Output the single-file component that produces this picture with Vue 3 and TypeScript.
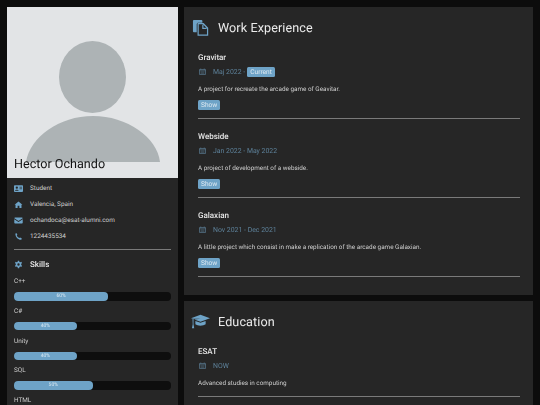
<script setup lang="ts">
interface Entry { title: string; date: string; current?: boolean; text: string; show: boolean }
const contacts = [
  { icon: 'id', text: 'Student' },
  { icon: 'home', text: 'Valencia, Spain' },
  { icon: 'mail', text: 'ochandoca@esat-alumni.com' },
  { icon: 'phone', text: '1224435534' },
]
const skills = [
  { name: 'C++', pct: 60 },
  { name: 'C#', pct: 40 },
  { name: 'Unity', pct: 40 },
  { name: 'SQL', pct: 50 },
  { name: 'HTML', pct: 50 },
]
const work: Entry[] = [
  { title: 'Gravitar', date: 'Maj 2022 -', current: true, text: 'A project for recreate the arcade game of Geavitar.', show: true },
  { title: 'Webside', date: 'Jan 2022 - May 2022', text: 'A project of development of a webside.', show: true },
  { title: 'Galaxian', date: 'Nov 2021 - Dec 2021', text: 'A little project which consist in make a replication of the arcade game Galaxian.', show: true },
]
const education: Entry[] = [
  { title: 'ESAT', date: 'NOW', text: 'Advanced studies in computing', show: false },
]
</script>

<template>
  <div class="page">
    <aside class="side">
      <div class="photo">
        <svg class="avatar" viewBox="0 0 171 171">
          <ellipse cx="85.5" cy="70" rx="33.5" ry="36" fill="#adb3b5" />
          <path d="M19 155 C23 130 52 109 86 109 C120 109 150 130 153 155 Z" fill="#adb3b5" />
        </svg>
        <h2 class="name">Hector Ochando</h2>
      </div>
      <div class="side-body">
        <ul class="contacts">
          <li v-for="c in contacts" :key="c.text">
            <svg class="c-icon" viewBox="0 0 16 16">
              <template v-if="c.icon === 'id'">
                <rect x="0" y="2" width="16" height="12" rx="1.5" fill="#6ea3c7" />
                <circle cx="5" cy="6.5" r="2" fill="#262626" />
                <path d="M1.8 12 C2 9.5 8 9.5 8.2 12 Z" fill="#262626" />
                <rect x="9.8" y="5" width="4.4" height="1.2" fill="#262626" />
                <rect x="9.8" y="8" width="4.4" height="1.2" fill="#262626" />
              </template>
              <path v-else-if="c.icon === 'home'" d="M8 2.5 L15 8.5 L13.3 8.5 L13.3 14 L9.6 14 L9.6 10 L6.4 10 L6.4 14 L2.7 14 L2.7 8.5 L1 8.5 Z" fill="#6ea3c7" />
              <template v-else-if="c.icon === 'mail'">
                <path d="M0.5 4 Q0.5 2.5 2 2.5 L14 2.5 Q15.5 2.5 15.5 4 L8 9 Z" fill="#6ea3c7" />
                <path d="M0.5 5.6 L8 10.6 L15.5 5.6 L15.5 12.2 Q15.5 13.5 14 13.5 L2 13.5 Q0.5 13.5 0.5 12.2 Z" fill="#6ea3c7" />
              </template>
              <path v-else d="M4.2 1.8 L6 5 L4.9 6.4 C5.6 8.2 7.4 10 9.4 10.8 L10.8 9.8 L14 11.5 L13 13.7 C8 14.4 2.2 8.6 2.4 3 Z" fill="#6ea3c7" />
            </svg>
            <span class="c-text">{{ c.text }}</span>
          </li>
        </ul>
        <hr class="rule side-rule" />
        <h3 class="skills-title">
          <svg class="c-icon" viewBox="0 0 16 16">
            <path fill-rule="evenodd" d="M6.8 1.5 H9.2 L9.6 3.4 L11.3 4.2 L13 3.2 L14.3 5.3 L12.8 6.6 V8.9 L14.3 10.4 L13 12.5 L11.3 11.6 L9.6 12.5 L9.2 14.5 H6.8 L6.4 12.5 L4.7 11.6 L3 12.5 L1.7 10.4 L3.2 8.9 V6.6 L1.7 5.3 L3 3.2 L4.7 4.2 L6.4 3.4 Z M8 5.8 A2.1 2.1 0 1 0 8 10 A2.1 2.1 0 1 0 8 5.8 Z" fill="#6ea3c7" />
          </svg>
          <span>Skills</span>
        </h3>
        <div class="skills">
          <div v-for="s in skills" :key="s.name" class="skill">
            <p class="skill-name">{{ s.name }}</p>
            <div class="track">
              <div class="fill" :style="{ width: s.pct + '%' }">{{ s.pct }}%</div>
            </div>
          </div>
        </div>
      </div>
    </aside>

    <main class="main">
      <section class="card">
        <h2 class="card-title">
          <svg class="t-icon" viewBox="0 0 18 18">
            <path d="M1 2 Q1 1 2 1 H10 Q11 1 11 2 V4 H6.5 Q5 4 5 5.5 V14 H2 Q1 14 1 13 Z" fill="#6ea3c7" />
            <path d="M6.5 5 H12 L16.5 9.5 V17 H6.5 Z M11.5 6 V10 H15.5" fill="none" stroke="#6ea3c7" stroke-width="1.3" />
          </svg>
          <span>Work Experience</span>
        </h2>
        <article v-for="e in work" :key="e.title" class="entry">
          <h5 class="e-title">{{ e.title }}</h5>
          <p class="e-date">
            <svg class="cal" viewBox="0 0 14 14">
              <path d="M1 3 H13 V13 H1 Z M3.5 1 V3 M10.5 1 V3" fill="none" stroke="#5d8099" stroke-width="1.3" />
              <path d="M1 5.5 H13 M3 8 H11 M3 10.5 H11" stroke="#5d8099" stroke-width="1.1" />
            </svg>
            <span>{{ e.date }}</span>
            <span v-if="e.current" class="tag cur">Current</span>
          </p>
          <p class="e-text">{{ e.text }}</p>
          <span v-if="e.show" class="tag show">Show</span>
          <hr class="rule e-rule" />
        </article>
      </section>

      <section class="card">
        <h2 class="card-title">
          <svg class="t-icon edu" viewBox="0 0 20 16">
            <path d="M10 1 L20 4.6 L10 8.2 L3.4 5.8 L10 5 L2.4 5.2 L0 4.6 Z" fill="#6ea3c7" />
            <path d="M4.6 7.4 L10 9.4 L15.4 7.4 V11 C13 13 7 13 4.6 11 Z" fill="#6ea3c7" />
            <path d="M1.6 5 L2.6 5 V11 L3.4 15 H1 L1.8 11 Z" fill="#6ea3c7" />
          </svg>
          <span>Education</span>
        </h2>
        <article v-for="e in education" :key="e.title" class="entry">
          <h5 class="e-title">{{ e.title }}</h5>
          <p class="e-date">
            <svg class="cal" viewBox="0 0 14 14">
              <path d="M1 3 H13 V13 H1 Z M3.5 1 V3 M10.5 1 V3" fill="none" stroke="#5d8099" stroke-width="1.3" />
              <path d="M1 5.5 H13 M3 8 H11 M3 10.5 H11" stroke="#5d8099" stroke-width="1.1" />
            </svg>
            <span>{{ e.date }}</span>
          </p>
          <p class="e-text">{{ e.text }}</p>
          <hr class="rule e-rule" />
        </article>
      </section>
    </main>
  </div>
</template>

<style>
html, body { margin: 0; background: #0c0c0c; overflow: hidden; }
</style>

<style scoped>
.page {
  display: grid;
  grid-template-columns: 171px 349px;
  gap: 6px;
  padding: 7px 0 0 7px;
  width: 540px;
  height: 405px;
  box-sizing: border-box;
  overflow: hidden;
  font-family: Roboto, "Liberation Sans", sans-serif;
  color: #d8d8d8;
  align-items: start;
  filter: blur(0.35px);
  text-rendering: geometricPrecision;
}
.side { background: #262626; }
.photo {
  position: relative;
  height: 171px;
  background: #e2e4e6;
}
.avatar { display: block; width: 171px; height: 171px; }
.name {
  position: absolute;
  left: 7px;
  bottom: 5px;
  margin: 0;
  font-size: 12.6px;
  line-height: 16px;
  font-weight: 400;
  color: #111;
}
.side-body { padding: 0 7px 12px 7px; }
.contacts { list-style: none; margin: 0; padding: 2px 0 0; }
.contacts li {
  display: flex;
  align-items: center;
  height: 16px;
  font-size: 6.4px;
  color: #cfcfcf;
}
.c-icon { width: 9px; height: 9px; flex: none; margin-right: 7px; margin-left: 0; }
.rule { border: 0; border-top: 1px solid #7a7a7a; margin: 0; }
.side-rule { margin-top: 5px; }
.skills-title {
  display: flex;
  align-items: center;
  margin: 8px 0 0;
  height: 12px;
  font-size: 8px;
  font-weight: 500;
  color: #e8e8e8;
}
.skills { display: flex; flex-direction: column; margin-top: 6px; gap: 5.3px; }
.skill-name { margin: 0; height: 10px; line-height: 10px; font-size: 6.4px; color: #cfcfcf; }
.track { height: 8.5px; margin-top: 6px; border-radius: 4px; background: #0e0e0e; }
.fill {
  height: 8.5px;
  border-radius: 4px;
  background: #6ea3c7;
  color: #d9e8f2;
  font-size: 5px;
  line-height: 8.5px;
  text-align: center;
}
.main { display: flex; flex-direction: column; gap: 6px; }
.card { background: #262626; padding: 0 13px 0 14px; }
.card:first-child { padding-bottom: 10px; }
.card-title {
  display: flex;
  align-items: center;
  height: 41px;
  box-sizing: border-box;
  padding-top: 1px;
  margin: 0 0 0 -6px;
  font-size: 12.6px;
  font-weight: 400;
  color: #ececec;
  letter-spacing: 0.1px;
}
.t-icon { width: 17px; height: 17px; margin-right: 9px; margin-top: -1px; flex: none; }
.edu { width: 19px; margin-left: -1px; margin-right: 8px; }
.entry { padding-bottom: 8px; }
.e-title { margin: 4px 0 0; font-size: 8px; line-height: 12px; font-weight: 500; color: #e6e6e6; }
.e-date {
  display: flex;
  align-items: center;
  margin: 1px 0 0;
  height: 14px;
  font-size: 6.9px;
  color: #5d8099;
}
.cal { width: 7px; height: 7px; margin: -1px 7px 0 1px; flex: none; }
.tag {
  display: inline-block;
  height: 10px;
  line-height: 10px;
  padding: 0 3px;
  border-radius: 1.5px;
  background: #6ea3c7;
  font-size: 6.6px;
  color: #dfeaf2;
}
.cur { margin-left: 2px; }
.e-text { margin: 5.5px 0 0; font-size: 6.35px; line-height: 9px; color: #cdcdcd; }
.show { display: block; width: fit-content; margin: 6.5px 0 8px; }
.e-text + .e-rule { margin-top: 8.5px; }
</style>
